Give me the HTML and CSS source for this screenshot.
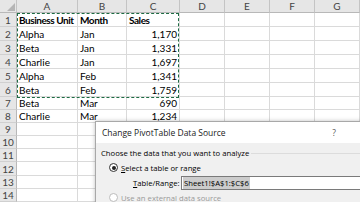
FILE: index.html
```html
<!DOCTYPE html>
<html>
<head>
    <title>PivotTable Data Source</title>
    <link rel="stylesheet" href="styles.css">
</head>
<body>
    <div class="sheet">
        <div class="grid">
            <div class="hdr corner"><span class="tri"></span></div>
            <div class="hdr">A</div>
            <div class="hdr">B</div>
            <div class="hdr">C</div>
            <div class="hdr">D</div>
            <div class="hdr">E</div>
            <div class="hdr">F</div>
            <div class="hdr">G</div>

            <div class="rh">1</div><div class="c b">Business Unit</div><div class="c b">Month</div><div class="c b">Sales</div><div class="c"></div><div class="c"></div><div class="c"></div><div class="c"></div>
            <div class="rh">2</div><div class="c">Alpha</div><div class="c">Jan</div><div class="c n">1,170</div><div class="c"></div><div class="c"></div><div class="c"></div><div class="c"></div>
            <div class="rh">3</div><div class="c">Beta</div><div class="c">Jan</div><div class="c n">1,331</div><div class="c"></div><div class="c"></div><div class="c"></div><div class="c"></div>
            <div class="rh">4</div><div class="c">Charlie</div><div class="c">Jan</div><div class="c n">1,697</div><div class="c"></div><div class="c"></div><div class="c"></div><div class="c"></div>
            <div class="rh">5</div><div class="c">Alpha</div><div class="c">Feb</div><div class="c n">1,341</div><div class="c"></div><div class="c"></div><div class="c"></div><div class="c"></div>
            <div class="rh">6</div><div class="c">Beta</div><div class="c">Feb</div><div class="c n">1,759</div><div class="c"></div><div class="c"></div><div class="c"></div><div class="c"></div>
            <div class="rh">7</div><div class="c">Beta</div><div class="c">Mar</div><div class="c n">690</div><div class="c"></div><div class="c"></div><div class="c"></div><div class="c"></div>
            <div class="rh">8</div><div class="c">Charlie</div><div class="c">Mar</div><div class="c n">1,234</div><div class="c"></div><div class="c"></div><div class="c"></div><div class="c"></div>
            <div class="rh">9</div><div class="c"></div><div class="c"></div><div class="c"></div><div class="c"></div><div class="c"></div><div class="c"></div><div class="c"></div>
            <div class="rh">10</div><div class="c"></div><div class="c"></div><div class="c"></div><div class="c"></div><div class="c"></div><div class="c"></div><div class="c"></div>
            <div class="rh">11</div><div class="c"></div><div class="c"></div><div class="c"></div><div class="c"></div><div class="c"></div><div class="c"></div><div class="c"></div>
            <div class="rh">12</div><div class="c"></div><div class="c"></div><div class="c"></div><div class="c"></div><div class="c"></div><div class="c"></div><div class="c"></div>
            <div class="rh">13</div><div class="c"></div><div class="c"></div><div class="c"></div><div class="c"></div><div class="c"></div><div class="c"></div><div class="c"></div>
            <div class="rh">14</div><div class="c"></div><div class="c"></div><div class="c"></div><div class="c"></div><div class="c"></div><div class="c"></div><div class="c"></div>
        </div>

        <!-- copy range A1:C6 -->
        <div class="ants"></div>

        <div class="dialog">
            <div class="dlg-title">
                <span>Change PivotTable Data Source</span>
                <span class="help">?</span>
            </div>
            <div class="dlg-body">
                <div class="group-head">
                    <span>Choose the data that you want to analyze</span>
                    <span class="group-line"></span>
                </div>
                <div class="radio-row">
                    <span class="radio on"></span>
                    <span><u>S</u>elect a table or range</span>
                </div>
                <div class="range-row">
                    <span class="range-label"><u>T</u>able/Range:</span>
                    <div class="range-box"><span class="sel">Sheet1!$A$1:$C$6</span></div>
                </div>
                <div class="radio-row off">
                    <span class="radio"></span>
                    <span>Use an external data source</span>
                </div>
            </div>
        </div>
    </div>
</body>
</html>
```

FILE: styles.css
```css
/* GENERAL */
body {
    margin: 0;
    padding: 0;
    background-color: #fff;
    overflow: hidden;
}

.sheet {
    position: relative;
    width: 360px;
    height: 202px;
    overflow: hidden;
}

/* GRID */
.grid {
    display: grid;
    grid-template-columns: 17px 61px 49px 53px 45px 45px 45px 45px;
    grid-template-rows: 13px repeat(6, 14px);
    grid-auto-rows: 13.1px;
    font-family: Lato, 'Liberation Sans', sans-serif;
    font-size: 10px;
    color: #000;
}

.hdr {
    background-color: #e6e6e6;
    border-right: 1px solid #c4c4c4;
    border-bottom: 1px solid #b8b8b8;
    color: #444;
    text-align: center;
    line-height: 12px;
    box-sizing: border-box;
}

.corner {
    position: relative;
}

.tri {
    position: absolute;
    right: 1px;
    bottom: 1px;
    width: 0;
    height: 0;
    border-left: 8px solid transparent;
    border-bottom: 8px solid #b5b5b5;
}

.rh {
    background-color: #e6e6e6;
    border-right: 1px solid #b8b8b8;
    border-bottom: 1px solid #d0d0d0;
    color: #444;
    text-align: center;
    display: flex;
    align-items: center;
    justify-content: center;
    box-sizing: border-box;
}

.c {
    border-right: 1px solid #dadada;
    border-bottom: 1px solid #dadada;
    padding: 0 2px;
    display: flex;
    align-items: center;
    white-space: nowrap;
    overflow: hidden;
    box-sizing: border-box;
}

.b {
    font-weight: bold;
    letter-spacing: -0.45px;
}

.n {
    justify-content: flex-end;
}

/* MARCHING ANTS */
.ants {
    position: absolute;
    left: 17px;
    top: 13px;
    width: 162px;
    height: 85px;
    border: 1px dashed #1d6b43;
    box-sizing: border-box;
}

/* DIALOG */
.dialog {
    position: absolute;
    left: 95px;
    top: 121px;
    width: 290px;
    height: 100px;
    background-color: #f0f0f0;
    border: 1px solid #a8a8a8;
    box-shadow: 0 0 4px rgba(0, 0, 0, 0.25);
    font-family: 'Open Sans', 'Noto Sans', sans-serif;
    font-size: 7.7px;
    color: #000;
}

.dlg-title {
    display: flex;
    justify-content: space-between;
    align-items: center;
    height: 21px;
    padding: 0 50px 0 6px;
    background-color: #fff;
    font-size: 8.5px;
    color: #222;
}

.help {
    color: #555;
}

.dlg-body {
    display: flex;
    flex-direction: column;
    padding: 3px 0 0 5px;
}

.group-head {
    display: flex;
    align-items: center;
    gap: 2px;
    height: 14px;
}

.group-line {
    flex: 1;
    border-top: 1px solid #dcdcdc;
}

.radio-row {
    display: flex;
    align-items: center;
    gap: 3px;
    height: 15px;
    padding-left: 8px;
}

.radio {
    width: 7px;
    height: 7px;
    border: 1px solid #333;
    border-radius: 50%;
    background-color: #fff;
    position: relative;
}

.radio.on::after {
    content: '';
    position: absolute;
    left: 1.5px;
    top: 1.5px;
    width: 4px;
    height: 4px;
    border-radius: 50%;
    background-color: #222;
}

.range-row {
    display: flex;
    align-items: center;
    height: 15px;
    padding-left: 32px;
}

.range-label {
    width: 48px;
}

.range-box {
    flex: 1;
    height: 14px;
    margin-right: 10px;
    border: 1px solid #7a7a7a;
    background-color: #fff;
    box-sizing: border-box;
    display: flex;
    align-items: center;
    padding-left: 1px;
}

.sel {
    background-color: #cccccc;
    padding: 1px 1px;
    line-height: 10px;
}

.off {
    color: #9a9a9a;
}

.off .radio {
    border-color: #bcbcbc;
}
```
